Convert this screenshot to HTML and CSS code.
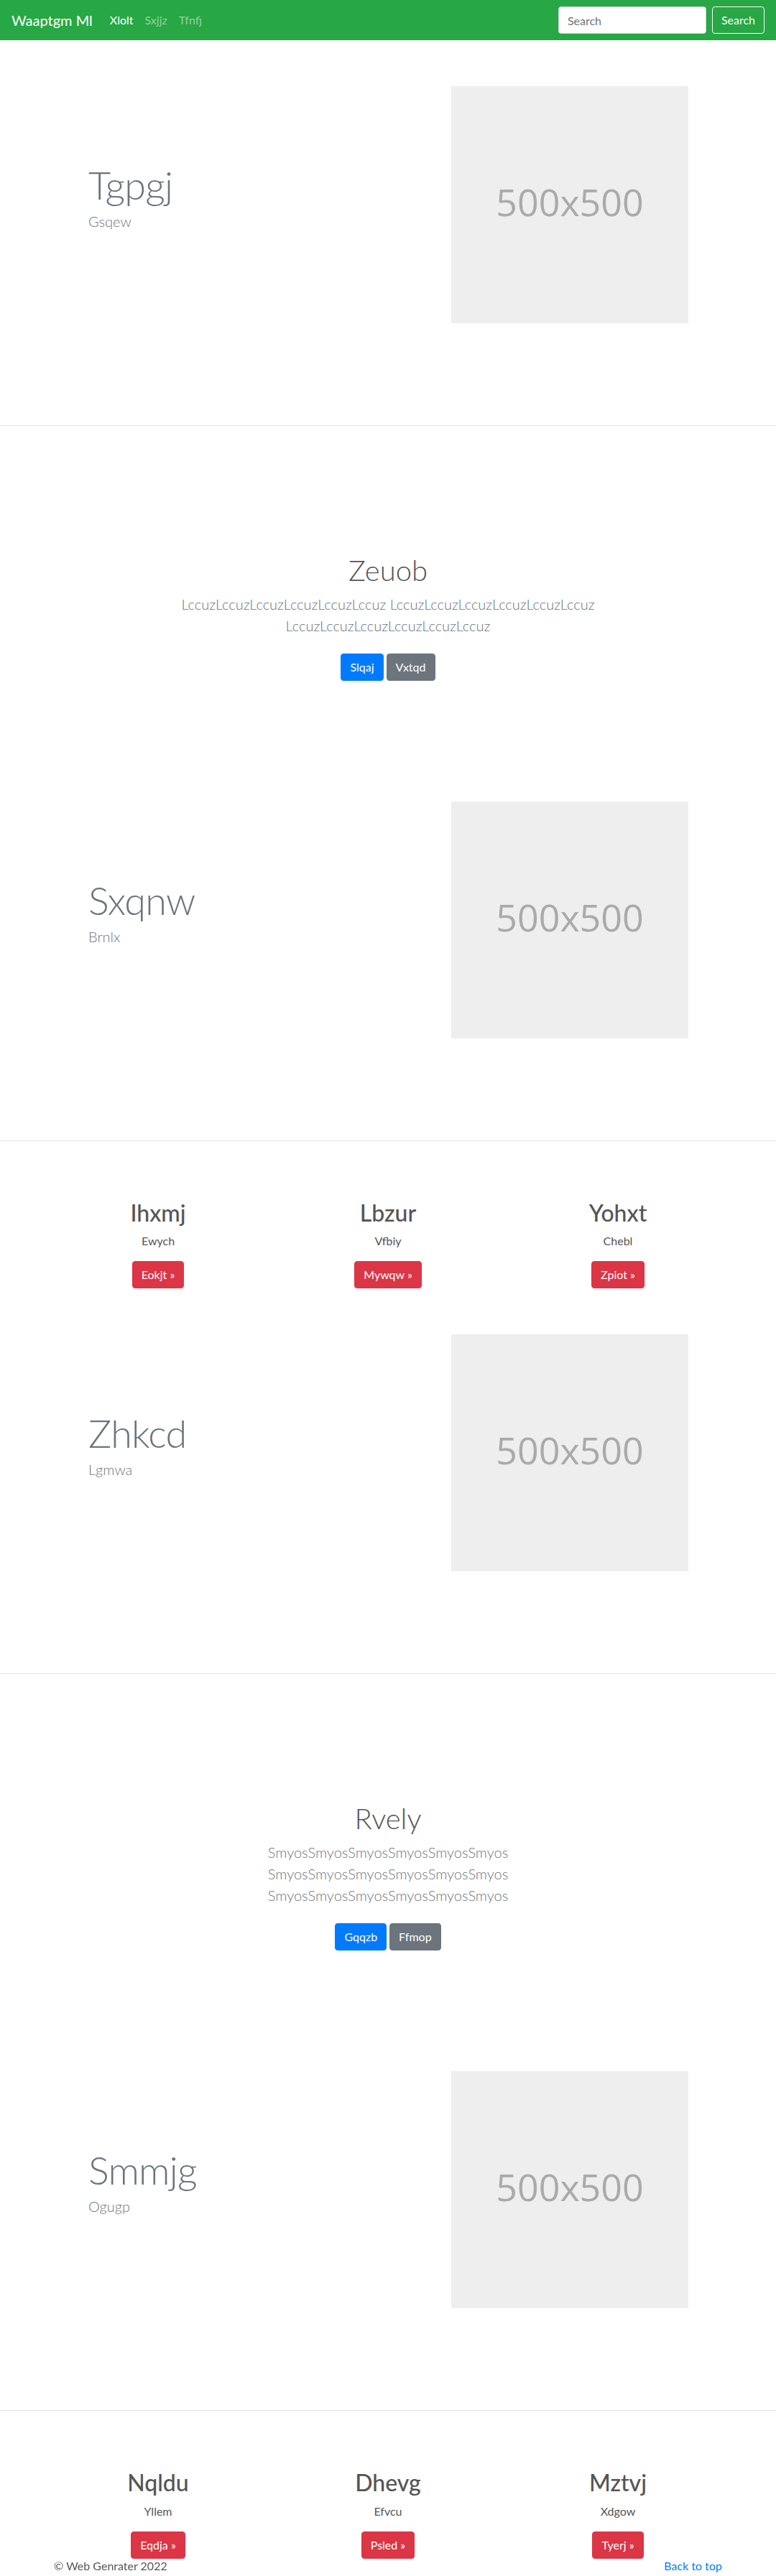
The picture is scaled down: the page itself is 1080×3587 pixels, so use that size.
FILE: index.html
```html
<!DOCTYPE html>
<html lang="en">
<head>
<meta charset="utf-8">
<title>Waaptgm Ml</title>
<link rel="stylesheet" href="styles.css">
</head>
<body>
<header class="navbar">
  <a class="brand" href="#">Waaptgm Ml</a>
  <nav class="nav">
    <a class="nav-link active" href="#">Xlolt</a>
    <a class="nav-link" href="#">Sxjjz</a>
    <a class="nav-link" href="#">Tfnfj</a>
  </nav>
  <form class="search">
    <input class="search-input" type="text" placeholder="Search">
    <button class="btn btn-outline-light" type="button">Search</button>
  </form>
</header>
<main>
  <section class="feature">
    <div class="feature-text">
      <h2 class="feature-heading">Tgpgj</h2>
      <p class="lead muted">Gsqew</p>
    </div>
    <div class="placeholder">500x500</div>
  </section>
  <hr class="divider">
  <section class="hero">
    <h1 class="hero-heading">Zeuob</h1>
    <p class="lead muted">LccuzLccuzLccuzLccuzLccuzLccuz LccuzLccuzLccuzLccuzLccuzLccuz LccuzLccuzLccuzLccuzLccuzLccuz</p>
    <div class="actions"><a class="btn btn-primary" href="#">Slqaj</a><a class="btn btn-secondary" href="#">Vxtqd</a></div>
  </section>
  <section class="feature">
    <div class="feature-text">
      <h2 class="feature-heading">Sxqnw</h2>
      <p class="lead muted">Brnlx</p>
    </div>
    <div class="placeholder">500x500</div>
  </section>
  <hr class="divider">
  <section class="cols">
    <div class="col">
      <h2 class="col-title">Ihxmj</h2>
      <p class="col-text">Ewych</p>
      <a class="btn btn-danger" href="#">Eokjt »</a>
    </div>
    <div class="col">
      <h2 class="col-title">Lbzur</h2>
      <p class="col-text">Vfbiy</p>
      <a class="btn btn-danger" href="#">Mywqw »</a>
    </div>
    <div class="col">
      <h2 class="col-title">Yohxt</h2>
      <p class="col-text">Chebl</p>
      <a class="btn btn-danger" href="#">Zpiot »</a>
    </div>
  </section>
  <section class="feature">
    <div class="feature-text">
      <h2 class="feature-heading">Zhkcd</h2>
      <p class="lead muted">Lgmwa</p>
    </div>
    <div class="placeholder">500x500</div>
  </section>
  <hr class="divider">
  <section class="hero">
    <h1 class="hero-heading">Rvely</h1>
    <p class="lead muted">SmyosSmyosSmyosSmyosSmyosSmyos SmyosSmyosSmyosSmyosSmyosSmyos SmyosSmyosSmyosSmyosSmyosSmyos</p>
    <div class="actions"><a class="btn btn-primary" href="#">Gqqzb</a><a class="btn btn-secondary" href="#">Ffmop</a></div>
  </section>
  <section class="feature">
    <div class="feature-text">
      <h2 class="feature-heading">Smmjg</h2>
      <p class="lead muted">Ogugp</p>
    </div>
    <div class="placeholder">500x500</div>
  </section>
  <hr class="divider">
  <section class="cols">
    <div class="col">
      <h2 class="col-title">Nqldu</h2>
      <p class="col-text">Yllem</p>
      <a class="btn btn-danger" href="#">Eqdja »</a>
    </div>
    <div class="col">
      <h2 class="col-title">Dhevg</h2>
      <p class="col-text">Efvcu</p>
      <a class="btn btn-danger" href="#">Psled »</a>
    </div>
    <div class="col">
      <h2 class="col-title">Mztvj</h2>
      <p class="col-text">Xdgow</p>
      <a class="btn btn-danger" href="#">Tyerj »</a>
    </div>
  </section>
</main>
<footer class="footer">
  <div class="footer-inner">
    <p>© Web Genrater 2022</p>
    <p><a href="#">Back to top</a></p>
  </div>
</footer>
</body>
</html>
```

FILE: styles.css
```css
* { box-sizing: border-box; }
html, body { margin: 0; }
body {
  font-family: Lato, "Segoe UI", "Liberation Sans", sans-serif;
  font-size: 16px;
  line-height: 1.5;
  color: #555;
  background: #fff;
}
a { text-decoration: none; }

.navbar {
  display: flex;
  align-items: center;
  height: 56px;
  padding: 0 16px;
  background: #28a745;
}
.brand {
  color: #fff;
  font-size: 20px;
  line-height: 30px;
  margin-right: 16px;
}
.nav { display: flex; }
.nav-link {
  color: rgba(255, 255, 255, 0.5);
  padding: 8px;
  font-size: 16px;
  line-height: 24px;
}
.nav-link.active { color: #fff; }
.search {
  margin: 0 0 0 auto;
  display: flex;
  align-items: center;
}
.search-input {
  width: 206px;
  height: 38px;
  padding: 6px 12px;
  font-family: inherit;
  font-size: 16px;
  color: #495057;
  border: 1px solid #ced4da;
  border-radius: 4px;
  margin-right: 8px;
  background: #fff;
}
.search-input::placeholder { color: #6c757d; }

.btn {
  display: inline-block;
  font-family: inherit;
  font-size: 16px;
  line-height: 24px;
  padding: 6px 12px;
  border: 1px solid transparent;
  border-radius: 4px;
  color: #fff;
  cursor: pointer;
}
.btn-outline-light { background: transparent; border-color: #f8f9fa; color: #f8f9fa; }
.btn-primary { background: #007bff; border-color: #007bff; }
.btn-secondary { background: #6c757d; border-color: #6c757d; }
.btn-danger { background: #dc3545; border-color: #dc3545; }

.feature {
  display: flex;
  align-items: center;
  justify-content: space-between;
  padding: 64px 122px 142px 123px;
}
.feature-heading {
  margin: 0 0 8px;
  font-size: 54px;
  font-weight: 300;
  line-height: 1;
  letter-spacing: -0.8px;
  color: #6c757d;
}
.lead {
  font-size: 20px;
  font-weight: 300;
  line-height: 30px;
  margin: 0 0 16px;
}
.muted { color: #6c757d; }
.placeholder {
  width: 330px;
  height: 330px;
  flex: none;
  background: #eee;
  color: #aaa;
  display: flex;
  align-items: center;
  justify-content: center;
  font-family: "Open Sans", sans-serif;
  font-size: 52px;
  padding-bottom: 8px;
}
.divider {
  margin: 0;
  border: 0;
  border-top: 1px solid rgba(0, 0, 0, 0.1);
}

.hero {
  max-width: 640px;
  margin: 0 auto;
  padding: 177px 15px 104px;
  text-align: center;
}
.hero-heading {
  margin: 0 0 8px;
  font-size: 40px;
  font-weight: 300;
  line-height: 48px;
}
.hero .lead { margin-bottom: 24px; }
.actions {
  display: flex;
  justify-content: center;
  gap: 4px;
}

.cols {
  width: 960px;
  margin: 0 auto;
  padding-top: 81px;
  display: grid;
  grid-template-columns: repeat(3, 1fr);
  text-align: center;
}
.col { padding: 0 15px; }
.col-title {
  margin: 0 0 8px;
  font-size: 32px;
  font-weight: 500;
  line-height: 38.4px;
}
.col-text { margin: 0 0 16px; }

.footer {
  position: fixed;
  left: 0;
  right: 0;
  bottom: 2px;
}
.footer-inner {
  width: 960px;
  margin: 0 auto;
  padding: 0 15px;
  display: flex;
  justify-content: space-between;
}
.footer p { margin: 0; }
.footer a { color: #007bff; }
```
